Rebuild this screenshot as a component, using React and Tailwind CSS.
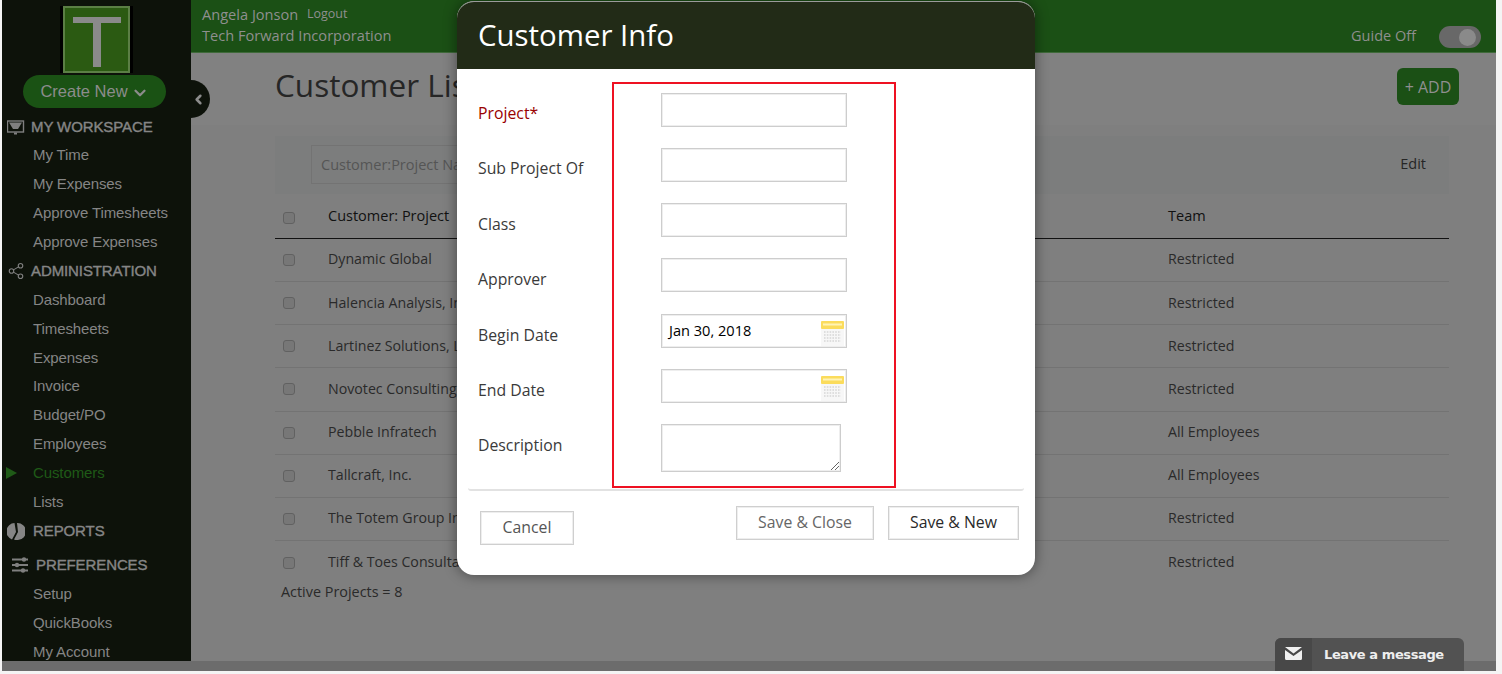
import React from "react";
import { ChevronDown, ChevronLeft, Share2 } from "lucide-react";

const navGroups = [
  { label: "MY WORKSPACE", icon: "monitor", items: ["My Time", "My Expenses", "Approve Timesheets", "Approve Expenses"] },
  { label: "ADMINISTRATION", icon: "share", items: ["Dashboard", "Timesheets", "Expenses", "Invoice", "Budget/PO", "Employees", "Customers", "Lists"] },
  { label: "REPORTS", icon: "pie", items: [] },
  { label: "PREFERENCES", icon: "sliders", items: ["Setup", "QuickBooks", "My Account"] },
];

const rows = [
  ["Dynamic Global", "Restricted"],
  ["Halencia Analysis, Inc.", "Restricted"],
  ["Lartinez Solutions, LLC", "Restricted"],
  ["Novotec Consulting", "Restricted"],
  ["Pebble Infratech", "All Employees"],
  ["Tallcraft, Inc.", "All Employees"],
  ["The Totem Group Inc.", "Restricted"],
  ["Tiff & Toes Consultants", "Restricted"],
];

const fieldLabels = ["Project*", "Sub Project Of", "Class", "Approver", "Begin Date", "End Date", "Description"];

function NavIcon({ name }) {
  if (name === "monitor") {
    return (
      <svg width="18" height="16" viewBox="0 0 18 16" className="text-[#7f7f7f]">
        <rect x="0.5" y="1" width="16" height="11" fill="none" stroke="currentColor" strokeWidth="1.4" />
        <path d="M2 2.5h13L11 9H6z" fill="currentColor" />
        <rect x="7" y="12.5" width="3" height="2" fill="currentColor" />
      </svg>
    );
  }
  if (name === "share") return <Share2 size={18} strokeWidth={1.5} className="text-[#7f7f7f]" />;
  if (name === "pie") {
    return (
      <svg width="18" height="19" viewBox="0 0 18 19" className="text-[#858585]">
        <path d="M7.5 1A8.5 8.5 0 0 0 5 17.5l4-7.5z" fill="currentColor" />
        <path d="M10 1a8.5 8.5 0 0 1 1 17 8 8 0 0 1-4-.4l4-7.6z" fill="currentColor" />
      </svg>
    );
  }
  return (
    <svg width="18" height="16" viewBox="0 0 18 16" className="text-[#7f7f7f]">
      <path d="M1 2.500h16M1 8h16M1 13.500h16" stroke="currentColor" strokeWidth="2.2" />
      <circle cx="13" cy="2.5" r="2.2" fill="currentColor" />
      <circle cx="6" cy="8" r="2.2" fill="currentColor" />
      <circle cx="12" cy="13.5" r="2.2" fill="currentColor" />
    </svg>
  );
}

function Sidebar() {
  return (
    <aside className="relative w-[189px] h-full shrink-0 bg-[#0d120a] flex flex-col overflow-hidden font-['Liberation_Sans',sans-serif] text-[#858585]">
      <div className="ml-[58px] mt-[6px] w-[73px] h-[71px] bg-black flex items-center justify-center">
        <div className="w-[67px] h-[67px] bg-[#2b5a12] border-2 border-[#5b7f45] flex flex-col items-center pt-[9px]">
          <div className="w-[48px] h-[6px] bg-[#8a8a8a]" />
          <div className="w-[8px] h-[44px] bg-[#8a8a8a]" />
        </div>
      </div>
      <div className="ml-[21px] mt-[2px] w-[143px] h-[33px] rounded-full bg-[#1a5214] flex items-center justify-center text-[16.5px] text-[#8c8c8c] shrink-0">
        Create New <ChevronDown size={18} strokeWidth={3} className="ml-[3px] mt-[3px]" />
      </div>
      <nav className="mt-[6px] flex flex-col text-[15px] tracking-[-0.1px]">
        {navGroups.map((g, i) => (
          <div key={g.label} className={g.label === "PREFERENCES" ? "mt-[5px]" : ""}>
            <div className={`flex items-center ${i === 0 ? "h-[27px]" : "h-[29px]"}`}>
              <span className={`w-[29px] flex justify-center ${g.label === "PREFERENCES" ? "ml-[3px] mr-[2px]" : g.label === "REPORTS" ? "ml-[-1px] mr-[3px]" : "ml-[-1px] mr-[1px]"}`}>
                <NavIcon name={g.icon} />
              </span>
              <span className="[-webkit-text-stroke:0.4px_#858585]">{g.label}</span>
            </div>
            {g.items.map((it) => (
              <div key={it} className={`h-[28.9px] pl-[31px] flex items-center relative ${it === "Customers" ? "text-[#1f5a17]" : ""}`}>
                {it === "Customers" && <span className="absolute left-[4px] top-[8px] w-0 h-0 border-y-[6px] border-y-transparent border-l-[11px] border-l-[#1f5a17]" />}
                {it}
              </div>
            ))}
          </div>
        ))}
      </nav>
    </aside>
  );
}

function Checkbox() {
  return <span className="block w-[12px] h-[12px] rounded-[3px] bg-[#777777] border border-[#616161]" />;
}

function Main() {
  return (
    <main className="relative flex-1 h-full bg-[#7f7f7f] flex flex-col font-['Open_Sans',sans-serif] text-[#1f1f1f] overflow-hidden">
      <header className="h-[53px] shrink-0 bg-[#1b5015] border-b border-[#3f6a3a] pl-[11px] pr-[15px] flex justify-between text-[#8f8f8f]">
        <div className="text-[14.6px] leading-[21px] pt-[3px]">
          <div>Angela Jonson <span className="text-[12.5px] ml-[5px] align-[2px]">Logout</span></div>
          <div>Tech Forward Incorporation</div>
        </div>
        <div className="flex items-end pb-[4px] text-[14.5px]">
          <span className="mb-[1px]">Guide Off</span>
          <div className="ml-[23px] w-[42px] h-[22px] rounded-full bg-[#686868] flex items-center justify-end pr-[5px]">
            <span className="w-[17px] h-[17px] rounded-full bg-[#8a8a8a]" />
          </div>
        </div>
      </header>
      <div className="h-[72px] shrink-0 bg-[#818181] pl-[84px] pr-[37px] flex items-start justify-between">
        <h1 className="text-[31.5px] leading-[64px] text-[#262626]">Customer List</h1>
        <button className="mt-[15px] w-[62px] h-[37px] rounded-[6px] bg-[#1b5015] text-[16px] text-[#8f8f8f]">+ ADD</button>
      </div>
      <section className="ml-[84px] mr-[47px] mt-[11px] flex flex-col">
        <div className="h-[58px] bg-[#7c7d7d] flex items-center pl-[36px] pr-[23px] justify-between text-[14.5px]">
          <div className="w-[300px] h-[39px] mt-[-1px] border border-[#737373] pl-[9px] flex items-center text-[#555555]">Customer:Project Name</div>
          <span className="text-[#262626] mt-[-2px]">Edit</span>
        </div>
        <div className="h-[45px] flex items-center border-b border-[#111] text-[14.5px] text-[#111]">
          <span className="w-[53px] pl-[8px] pt-[3px]"><Checkbox /></span>
          <span className="flex-1 pb-[1px]">Customer: Project</span>
          <span className="w-[281px] pb-[1px]">Team</span>
        </div>
        {rows.map(([name, team], i) => (
          <div key={name} className={`h-[43.15px] shrink-0 flex items-center text-[14.2px] text-[#2a2a2a] ${i < rows.length - 1 ? "border-b border-[#737373]" : ""}`}>
            <span className="w-[53px] pl-[8px]"><Checkbox /></span>
            <span className="flex-1 pb-[2px]">{name}</span>
            <span className="w-[281px] pb-[2px]">{team}</span>
          </div>
        ))}
        <div className="pl-[6px] mt-[-3px] text-[14.4px] text-[#2a2a2a]">Active Projects = 8</div>
      </section>
    </main>
  );
}

function CalendarIcon() {
  return (
    <svg width="26" height="27" viewBox="0 0 26 27" className="absolute right-0 top-[5px]">
      <rect x="1" y="1" width="23" height="25" fill="#f7f7f7" />
      <rect x="1" y="1" width="23" height="8" rx="1" fill="#fbdc5c" />
      <rect x="3" y="3.5" width="19" height="2" fill="#fff3b5" />
      <path d="M4 12h17M4 15h17M4 18h17M4 21h17" stroke="#d6d6d6" strokeWidth="1.6" strokeDasharray="1.6 1.2" />
    </svg>
  );
}

function Field({ cal, value }) {
  return (
    <div className="relative w-[186px] h-[34px] border border-[#cdcdcd] shadow-[inset_0_0_0_1px_#eeeeee] bg-white pl-[7px] flex items-center text-[14.6px] text-black overflow-hidden">
      {value}
      {cal && <CalendarIcon />}
    </div>
  );
}

function Modal() {
  return (
    <div className="absolute left-[457px] top-[1px] w-[578px] h-[574px] rounded-[17px] bg-white overflow-hidden shadow-[0_0_14px_rgba(0,0,0,0.45)] border-t border-[#9a9a9a] font-['Open_Sans',sans-serif] flex flex-col">
      <div className="h-[67px] shrink-0 bg-[#222b17] pl-[21px] flex items-center text-[29.4px] text-white">Customer Info</div>
      <div className="flex mt-[13px] pl-[21px]">
        <div className="w-[134px] pt-[17px] text-[15.8px] text-[#3a3a3a]">
          {fieldLabels.map((l) => (
            <div key={l} className={`h-[55.4px] leading-[28px] ${l === "Project*" ? "text-[#990000]" : ""}`}>{l}</div>
          ))}
        </div>
        <div className="w-[284px] h-[406px] border-2 border-[#ee1122] pl-[47px] pt-[8.5px] flex flex-col gap-[21.3px]">
          <Field />
          <Field />
          <Field />
          <Field />
          <Field cal value="Jan 30, 2018" />
          <Field cal />
          <div className="relative w-[180px] h-[48px] border border-[#cdcdcd] shadow-[inset_0_0_0_1px_#eeeeee]">
            <svg width="10" height="10" viewBox="0 0 10 10" className="absolute right-0 bottom-0">
              <path d="M1 9l8-8M5 9l4-4" stroke="#666" strokeWidth="1" />
            </svg>
          </div>
        </div>
      </div>
      <div className="mx-[11px] h-[3px] shrink-0 rounded-b-[6px] border-b-2 border-[#e2e2e2]" />
      <div className="flex justify-between pl-[23px] pr-[16px] pt-[15px] text-[15.8px]">
        <button className="mt-[5px] w-[94px] h-[34px] border border-[#cfcfcf] shadow-[inset_0_0_0_1px_#eeeeee] text-[#555]">Cancel</button>
        <div className="flex gap-[14px]">
          <button className="w-[138px] h-[34px] border border-[#cfcfcf] shadow-[inset_0_0_0_1px_#eeeeee] text-[#666]">Save &amp; Close</button>
          <button className="w-[131px] h-[34px] border border-[#cfcfcf] shadow-[inset_0_0_0_1px_#eeeeee] text-[#2a2a2a]">Save &amp; New</button>
        </div>
      </div>
    </div>
  );
}

export default function App() {
  return (
    <div className="relative w-[1502px] h-[674px] bg-[#f4f4f4] overflow-hidden">
      <div className="ml-[2px] w-[1494px] h-[671px] bg-[#6c6c6c]">
        <div className="h-[661px] flex">
          <Sidebar />
          <Main />
        </div>
      </div>
      <div className="absolute left-[191px] top-[80px] w-[19px] h-[38px] rounded-r-full bg-[#0d120a] flex items-center text-[#8c8c8c]">
        <ChevronLeft size={15} strokeWidth={4} />
      </div>
      <div className="absolute left-[1275px] top-[638px] w-[189px] h-[33px] rounded-t-[6px] bg-[#525252] flex items-start overflow-hidden">
        <div className="w-[37px] h-full bg-[#484848] flex justify-center pt-[9px]">
          <svg width="17" height="13" viewBox="0 0 17 13">
            <path d="M0 0h17L8.500 6.500zM0 3l8.500 6L17 3v8.500a1.500 1.500 0 0 1-1.500 1.500h-14A1.500 1.500 0 0 1 0 11.500z" fill="#f0f0f0" />
          </svg>
        </div>
        <span className="ml-[12px] mt-[7px] text-[13px] font-bold text-[#eeeeee] font-['DejaVu_Sans',sans-serif] tracking-[-0.4px]">Leave a message</span>
      </div>
      <Modal />
    </div>
  );
}
